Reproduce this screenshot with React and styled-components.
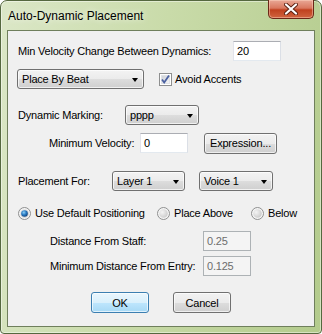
import styled, { createGlobalStyle } from "styled-components";

const GlobalStyle = createGlobalStyle`
  html, body {
    margin: 0;
    padding: 0;
    background: #ffffff;
  }
  body {
    font-family: "Liberation Sans", Arial, sans-serif;
  }
`;

const Window = styled.div`
  width: 322px;
  height: 334px;
  box-sizing: border-box;
  border: 1px solid #55683f;
  border-radius: 7px 7px 4px 4px;
  background: linear-gradient(100deg, #dbe7c7 0%, #c9dba9 45%, #b3cb8c 100%);
  box-shadow: inset 0 0 0 1px rgba(255, 255, 255, 0.45);
  display: flex;
  flex-direction: column;
  padding: 0 6px 6px 6px;
`;

const TitleBar = styled.div`
  height: 29px;
  display: flex;
  justify-content: space-between;
  align-items: flex-start;
  flex-shrink: 0;
`;

const Title = styled.div`
  font-size: 12px;
  color: #000;
  padding: 8px 0 0 1px;
  line-height: 14px;
  text-shadow: 0 0 6px rgba(255, 255, 255, 0.9);
`;

const CloseButton = styled.div`
  width: 46px;
  height: 19px;
  margin: -1px 1px 0 0;
  box-sizing: border-box;
  border: 1px solid #6b2717;
  border-top: none;
  border-radius: 0 0 5px 5px;
  background: linear-gradient(#e9a896 0%, #d9785f 45%, #c0411f 55%, #d0643f 100%);
  box-shadow: inset 0 0 0 1px rgba(255, 220, 200, 0.45);
  display: flex;
  align-items: center;
  justify-content: center;
`;

const Client = styled.div`
  flex: 1;
  box-sizing: border-box;
  border: 1px solid #6f7f5c;
  background: #f0f0f0;
  padding: 10px 0 0 10px;
  font-size: 11px;
  letter-spacing: -0.2px;
  color: #000;
`;

const Row = styled.div`
  display: flex;
  align-items: center;
  height: ${(p) => p.$h || 20}px;
  margin-top: ${(p) => p.$mt || 0}px;
  padding-left: ${(p) => p.$indent || 0}px;
`;

const Label = styled.span`
  display: inline-block;
  width: ${(p) => p.$w}px;
  flex-shrink: 0;
  white-space: nowrap;
`;

const TextBox = styled.div`
  width: 48px;
  height: 20px;
  box-sizing: border-box;
  border: 1px solid;
  border-color: ${(p) =>
    p.$disabled ? "#adb2b5" : "#abadb3 #dbdfe6 #e3e9ef #e2e3ea"};
  background: ${(p) => (p.$disabled ? "#f4f4f4" : "#ffffff")};
  color: ${(p) => (p.$disabled ? "#6d6d6d" : "#000")};
  padding: 0 3px;
  line-height: 18px;
`;

const Combo = styled.div`
  width: ${(p) => p.$w}px;
  height: 20px;
  box-sizing: border-box;
  border: 1px solid #707070;
  border-radius: 3px;
  background: linear-gradient(#f3f3f3 0%, #ebebeb 50%, #dddddd 51%, #cfcfcf 100%);
  box-shadow: inset 0 0 0 1px rgba(255, 255, 255, 0.7);
  display: flex;
  align-items: center;
  justify-content: space-between;
  padding: 0 5px 0 4px;
  margin-left: ${(p) => p.$ml || 0}px;
  flex-shrink: 0;
`;

const Arrow = styled.span`
  width: 0;
  height: 0;
  border-left: 3.5px solid transparent;
  border-right: 3.5px solid transparent;
  border-top: 4px solid #000;
  margin-top: 1px;
`;

const PushButton = styled.div`
  width: ${(p) => p.$w}px;
  height: ${(p) => p.$h || 21}px;
  box-sizing: border-box;
  border: 1px solid ${(p) => (p.$default ? "#3c7fb1" : "#707070")};
  border-radius: 3px;
  background: ${(p) =>
    p.$default
      ? "linear-gradient(#eaf6fd 0%, #d9f0fc 50%, #bee6fd 51%, #a7d9f5 100%)"
      : "linear-gradient(#f2f2f2 0%, #ebebeb 50%, #dddddd 51%, #cfcfcf 100%)"};
  box-shadow: inset 0 0 0 1px rgba(255, 255, 255, 0.65);
  display: flex;
  align-items: center;
  justify-content: center;
  margin-left: ${(p) => p.$ml || 0}px;
  flex-shrink: 0;
`;

const CheckWrap = styled.label`
  display: flex;
  align-items: center;
  gap: 3px;
  margin-left: ${(p) => p.$ml || 0}px;
`;

const RadioOption = styled.label`
  display: flex;
  align-items: center;
  gap: 4px;
  width: ${(p) => p.$w}px;
  flex-shrink: 0;
  white-space: nowrap;
`;

const ButtonRow = styled.div`
  display: flex;
  justify-content: center;
  gap: 24px;
  margin: 16px 0 0 -10px;
`;

const CloseIcon = () => (
  <svg width="14" height="12" viewBox="0 0 14 12">
    <path d="M2 1.5 L12 10.5 M12 1.5 L2 10.5" stroke="#5a1f10" strokeWidth="4" strokeLinecap="round" />
    <path d="M2 1.5 L12 10.5 M12 1.5 L2 10.5" stroke="#ffffff" strokeWidth="2.2" strokeLinecap="round" />
  </svg>
);

const CheckBox = () => (
  <svg width="13" height="13" viewBox="0 0 13 13">
    <defs>
      <linearGradient id="cbg" x1="0" y1="0" x2="1" y2="1">
        <stop offset="0" stopColor="#cbcfd5" />
        <stop offset="1" stopColor="#f6f6f6" />
      </linearGradient>
    </defs>
    <rect x="0.5" y="0.5" width="12" height="12" fill="#fff" stroke="#8e8f8f" />
    <rect x="2.5" y="2.5" width="8" height="8" fill="url(#cbg)" stroke="#e0e2e6" />
    <path d="M3 6.5 L5.2 9.5 L10 2.5" fill="none" stroke="#4a60a0" strokeWidth="1.8" />
  </svg>
);

const Radio = ({ checked }) => (
  <svg width="13" height="13" viewBox="0 0 13 13">
    <defs>
      <radialGradient id="rOff" cx="0.35" cy="0.35" r="0.8">
        <stop offset="0" stopColor="#f4f4f4" />
        <stop offset="1" stopColor="#c6c6c6" />
      </radialGradient>
      <radialGradient id="rOn" cx="0.4" cy="0.35" r="0.7">
        <stop offset="0" stopColor="#8fd0f5" />
        <stop offset="0.5" stopColor="#2a7cc4" />
        <stop offset="1" stopColor="#0f3f7a" />
      </radialGradient>
    </defs>
    <circle cx="6.5" cy="6.5" r="6" fill="#f5f5f5" stroke="#8e8f8f" />
    <circle cx="6.5" cy="6.5" r="4.3" fill="url(#rOff)" />
    {checked && <circle cx="6.5" cy="6.5" r="3.3" fill="url(#rOn)" />}
  </svg>
);

export default function App() {
  return (
    <>
      <GlobalStyle />
      <Window>
        <TitleBar>
          <Title>Auto-Dynamic Placement</Title>
          <CloseButton>
            <CloseIcon />
          </CloseButton>
        </TitleBar>
        <Client>
          <Row>
            <Label $w={215}>Min Velocity Change Between Dynamics:</Label>
            <TextBox>20</TextBox>
          </Row>
          <Row $mt={8}>
            <Combo $w={127} $ml={-1}>
              Place By Beat
              <Arrow />
            </Combo>
            <CheckWrap $ml={15}>
              <CheckBox />
              Avoid Accents
            </CheckWrap>
          </Row>
          <Row $mt={16}>
            <Label $w={107}>Dynamic Marking:</Label>
            <Combo $w={74}>
              pppp
              <Arrow />
            </Combo>
          </Row>
          <Row $mt={7} $h={22} $indent={31}>
            <Label $w={91}>Minimum Velocity:</Label>
            <TextBox>0</TextBox>
            <PushButton $w={73} $ml={16}>
              Expression...
            </PushButton>
          </Row>
          <Row $mt={17}>
            <Label $w={94}>Placement For:</Label>
            <Combo $w={73}>
              Layer 1
              <Arrow />
            </Combo>
            <Combo $w={74} $ml={14}>
              Voice 1
              <Arrow />
            </Combo>
          </Row>
          <Row $mt={14} $h={16}>
            <RadioOption $w={139}>
              <Radio checked />
              Use Default Positioning
            </RadioOption>
            <RadioOption $w={94}>
              <Radio />
              Place Above
            </RadioOption>
            <RadioOption $w={50}>
              <Radio />
              Below
            </RadioOption>
          </Row>
          <Row $mt={10} $indent={32}>
            <Label $w={153}>Distance From Staff:</Label>
            <TextBox $disabled>0.25</TextBox>
          </Row>
          <Row $mt={5} $indent={32}>
            <Label $w={153}>Minimum Distance From Entry:</Label>
            <TextBox $disabled>0.125</TextBox>
          </Row>
          <ButtonRow>
            <PushButton $w={58} $default>
              OK
            </PushButton>
            <PushButton $w={58}>Cancel</PushButton>
          </ButtonRow>
        </Client>
      </Window>
    </>
  );
}
